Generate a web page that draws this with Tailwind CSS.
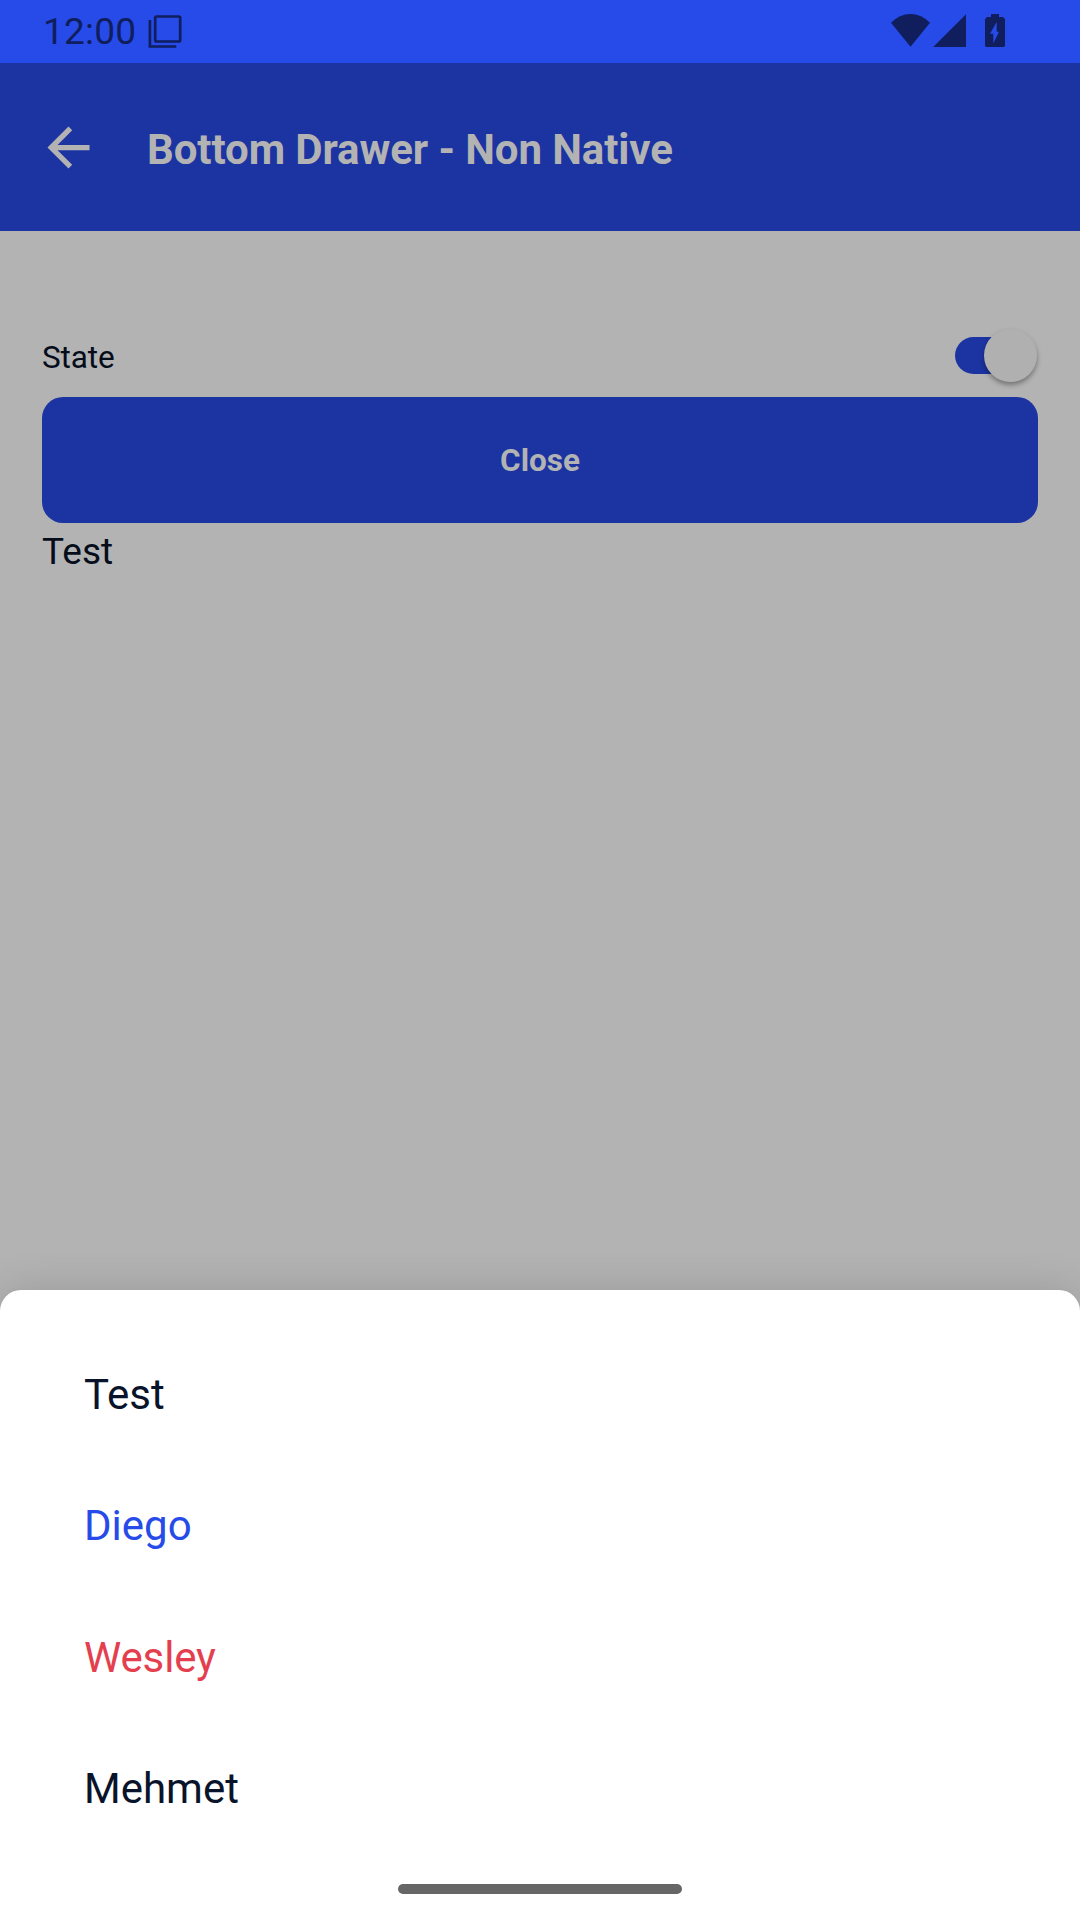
<!DOCTYPE html>
<html lang="en">
<head>
<meta charset="utf-8">
<title>Bottom Drawer - Non Native</title>
<script src="https://cdn.jsdelivr.net/npm/@tailwindcss/browser@4"></script>
</head>
<body class="relative flex h-[1920px] w-[1080px] flex-col overflow-hidden bg-[#b3b3b3] font-['Roboto',sans-serif] text-[#050c1a]">
  <!-- Status bar -->
  <div class="flex h-[63px] shrink-0 items-start bg-[#264be8] pl-[43px] text-[#101e5d]">
    <span class="mt-[10px] w-[104px] text-[37px] leading-[44px] tracking-[0.2px]">12:00</span>
    <svg class="h-[63px] w-9" viewBox="147 0 36 63" fill="none" stroke="currentColor" stroke-width="2.7">
      <rect x="155.2" y="16.5" width="25" height="25" rx="1.5"/>
      <path d="M149.900 20V46.500H176.300"/>
    </svg>
    <svg class="ml-[707px] h-[63px] w-[120px]" viewBox="890 0 120 63" fill="currentColor">
      <path d="M891 22.800Q899.500 14 910.500 14T930 22.800L910.500 46.700Z"/>
      <path d="M966 14.200V47H933.200Z"/>
      <path fill-rule="evenodd" d="M991 14h8v3h4l2 2v27l-1 1h-18l-1-1V19l2-2h4ZM996.700 22L990 33.700H993.300V43.500L999 31.700H996.700Z"/>
    </svg>
  </div>
  <!-- App header -->
  <header class="flex h-[168px] shrink-0 items-center bg-[#1c34a2] pl-[37px] text-[#b3b3b3]">
    <svg class="h-[63px] w-[63px]" viewBox="0 0 24 24" fill="currentColor"><path d="M20 11H7.830l5.590-5.590L12 4l-8 8 8 8 1.410-1.410L7.830 13H20v-2z"/></svg>
    <h1 class="ml-[47px] pt-[5px] text-[42px] leading-[50px] font-bold tracking-[-0.09px]">Bottom Drawer - Non Native</h1>
  </header>
  <!-- Page content -->
  <main class="flex flex-col px-[42px] pt-[84px]">
    <div class="flex h-[82px] items-start justify-between pt-[22px]">
      <span class="mt-[2px] text-[31.5px] leading-[38px] tracking-[-0.1px]">State</span>
      <div class="mr-[1px] flex h-[37px] w-[82px] items-center justify-end rounded-full bg-linear-to-r from-[#1c34a2] from-60% to-transparent to-60%">
        <span class="h-[53px] w-[53px] shrink-0 rounded-full bg-[#b0b0b0] shadow-[0_3px_5px_rgba(0,0,0,0.35)]"></span>
      </div>
    </div>
    <button class="h-[126px] rounded-[21px] bg-[#1c34a2] pt-[2px] text-[31.5px] leading-[38px] font-bold text-[#b3b3b3]">Close</button>
    <p class="mt-[7px] text-[37px] leading-[44px]">Test</p>
  </main>
  <!-- Bottom drawer -->
  <section class="absolute inset-x-0 bottom-0 h-[630px] rounded-t-[21px] bg-white pt-[39px] pl-[84px] text-[42px] text-[#09142a] shadow-[0_0_42px_rgba(0,0,0,0.15)]">
    <ul class="leading-[131.250px]">
      <li>Test</li>
      <li class="text-[#264be8]">Diego</li>
      <li class="tracking-[-0.15px] text-[#e43f4f]">Wesley</li>
      <li>Mehmet</li>
    </ul>
    <div class="absolute bottom-[26px] left-[398px] h-[10px] w-[284px] rounded-full bg-[#666666]"></div>
  </section>
</body>
</html>
